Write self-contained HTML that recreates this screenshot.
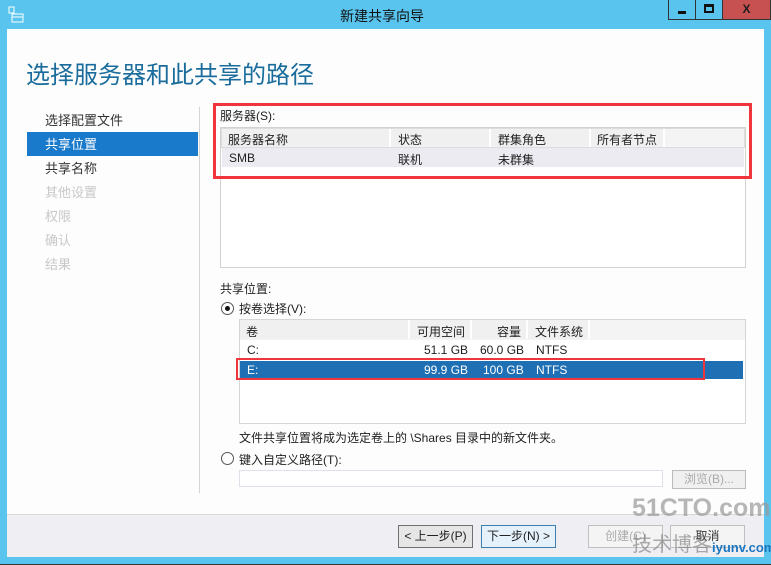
<!DOCTYPE html>
<html><head><meta charset="utf-8"><style>
*{margin:0;padding:0;box-sizing:border-box}
body{width:771px;height:565px;background:#59c5ee;position:relative;overflow:hidden;font-family:"Liberation Sans","Noto Sans CJK SC",sans-serif;font-size:12px;color:#1e1e1e}
.a{position:absolute;white-space:nowrap}
.win{position:absolute;left:7px;top:29px;width:757px;height:528px;background:#fcfdfc}
.bar{position:absolute;left:7px;top:514px;width:757px;height:43px;background:#efeef3;border-top:1px solid #d8d8d8}
.btn{position:absolute;height:23px;border:1px solid #707070;background:#e6e6e6;text-align:center;line-height:21px;font-size:12px}
.hdr{background:#f0f0f0;border-right:2px solid #fff}
</style></head><body>
<div class="a" style="left:0;top:564px;width:771px;height:1px;background:#333"></div>
<svg class="a" style="left:8px;top:6px" width="18" height="18" viewBox="0 0 18 18"><rect x="1" y="1" width="5" height="6" fill="none" stroke="#fff"/><rect x="4" y="8" width="11" height="8" fill="none" stroke="#fff"/><line x1="4" y1="11" x2="15" y2="11" stroke="#fff"/></svg>
<div class="a" style="left:340px;top:6px;font-size:14px;color:#111">新建共享向导</div>
<div class="a" style="left:668px;top:0;width:28px;height:20px;border:1px solid #333;border-top:none"><div class="a" style="left:9px;top:11px;width:8px;height:3px;background:#111"></div></div>
<div class="a" style="left:695px;top:0;width:28px;height:20px;border:1px solid #333;border-top:none"><div class="a" style="left:8px;top:4px;width:10px;height:9px;border:2px solid #111;border-top-width:3px"></div></div>
<div class="a" style="left:722px;top:0;width:49px;height:20px;background:#c75050;border:1px solid #333;border-top:none;text-align:center;font-weight:bold;font-size:12px;line-height:18px">X</div>
<div class="win"></div>
<div class="a" style="left:26px;top:55px;font-size:24px;color:#1a6c9c">选择服务器和此共享的路径</div>
<div class="a" style="left:27px;top:132px;width:171px;height:24px;background:#1979ca"></div>
<div class="a" style="left:45px;top:113px;font-size:13px;line-height:16px;color:#333">选择配置文件</div>
<div class="a" style="left:45px;top:137px;font-size:13px;line-height:16px;color:#fff">共享位置</div>
<div class="a" style="left:45px;top:161px;font-size:13px;line-height:16px;color:#333">共享名称</div>
<div class="a" style="left:45px;top:185px;font-size:13px;line-height:16px;color:#c8c8c8">其他设置</div>
<div class="a" style="left:45px;top:209px;font-size:13px;line-height:16px;color:#c8c8c8">权限</div>
<div class="a" style="left:45px;top:233px;font-size:13px;line-height:16px;color:#c8c8c8">确认</div>
<div class="a" style="left:45px;top:257px;font-size:13px;line-height:16px;color:#c8c8c8">结果</div>
<div class="a" style="left:199px;top:107px;width:1px;height:386px;background:#d4d4d4"></div>
<div class="a" style="left:220px;top:107px">服务器(S):</div>
<div class="a" style="left:220px;top:127px;width:526px;height:141px;border:1px solid #d6d0d0;background:#fff"></div>
<div class="a" style="left:221px;top:128px;width:524px;height:20px;background:#f4f4f4;border:1px solid #ddd"></div>
<div class="a hdr" style="left:222px;top:129px;width:169px;height:18px"></div>
<div class="a hdr" style="left:391px;top:129px;width:100px;height:18px"></div>
<div class="a hdr" style="left:491px;top:129px;width:100px;height:18px"></div>
<div class="a hdr" style="left:591px;top:129px;width:74px;height:18px"></div>
<div class="a" style="left:228px;top:131px">服务器名称</div>
<div class="a" style="left:398px;top:131px">状态</div>
<div class="a" style="left:498px;top:131px">群集角色</div>
<div class="a" style="left:597px;top:131px">所有者节点</div>
<div class="a" style="left:222px;top:148px;width:522px;height:19px;background:#ebebf1"></div>
<div class="a" style="left:229px;top:151px">SMB</div>
<div class="a" style="left:398px;top:151px">联机</div>
<div class="a" style="left:498px;top:151px">未群集</div>
<div class="a" style="left:213px;top:103px;width:539px;height:76px;border:3px solid #f0353d"></div>
<div class="a" style="left:220px;top:280px">共享位置:</div>
<div class="a" style="left:221px;top:302px;width:13px;height:13px;border:1px solid #555;border-radius:50%;background:#fff"><div class="a" style="left:3px;top:3px;width:5px;height:5px;border-radius:50%;background:#111"></div></div>
<div class="a" style="left:239px;top:300px">按卷选择(V):</div>
<div class="a" style="left:239px;top:319px;width:507px;height:105px;border:1px solid #d6d6d6;background:#fff"></div>
<div class="a" style="left:240px;top:320px;width:505px;height:20px;background:#f4f4f4"></div>
<div class="a hdr" style="left:240px;top:320px;width:170px;height:19px"></div>
<div class="a hdr" style="left:410px;top:320px;width:62px;height:19px"></div>
<div class="a hdr" style="left:472px;top:320px;width:56px;height:19px"></div>
<div class="a hdr" style="left:528px;top:320px;width:62px;height:19px"></div>
<div class="a" style="left:246px;top:323px">卷</div>
<div class="a" style="left:417px;top:323px">可用空间</div>
<div class="a" style="left:497px;top:323px">容量</div>
<div class="a" style="left:535px;top:323px">文件系统</div>
<div class="a" style="left:247px;top:343px">C:</div>
<div class="a" style="left:424px;top:343px">51.1 GB</div>
<div class="a" style="left:480px;top:343px">60.0 GB</div>
<div class="a" style="left:536px;top:343px">NTFS</div>
<div class="a" style="left:240px;top:361px;width:503px;height:18px;background:#1f6fb5"></div>
<div class="a" style="left:247px;top:363px;color:#fff">E:</div>
<div class="a" style="left:424px;top:363px;color:#fff">99.9 GB</div>
<div class="a" style="left:483px;top:363px;color:#fff">100 GB</div>
<div class="a" style="left:536px;top:363px;color:#fff">NTFS</div>
<div class="a" style="left:236px;top:358px;width:469px;height:22px;border:2px solid #f0353d"></div>
<div class="a" style="left:239px;top:429px">文件共享位置将成为选定卷上的 \Shares 目录中的新文件夹。</div>
<div class="a" style="left:221px;top:452px;width:13px;height:13px;border:1px solid #555;border-radius:50%;background:#fff"></div>
<div class="a" style="left:239px;top:451px">键入自定义路径(T):</div>
<div class="a" style="left:239px;top:470px;width:424px;height:17px;border:1px solid #e0e0e8;background:#fff"></div>
<div class="a" style="left:672px;top:470px;width:74px;height:19px;border:1px solid #bbb;background:#f0f0f0;color:#aaa;text-align:center;line-height:17px">浏览(B)...</div>
<div class="bar"></div>
<div class="btn" style="left:398px;top:525px;width:75px">&lt; 上一步(P)</div>
<div class="btn" style="left:481px;top:525px;width:75px;border-color:#3c7fb1;background:#e5f1fb">下一步(N) &gt;</div>
<div class="btn" style="left:588px;top:525px;width:75px;border-color:#c0c0c0;background:#f4f4f4;color:#aaa">创建(C)</div>
<div class="btn" style="left:670px;top:525px;width:75px;border-color:#c0c0c0;background:#f4f4f4;color:#333">取消</div>
<div class="a" style="left:632px;top:494px;font-size:25px;font-weight:bold;color:#999;opacity:.7">51CTO.com</div>
<div class="a" style="left:632px;top:528px;font-size:20px;color:#777;opacity:.6">技术博客</div>
<div class="a" style="left:712px;top:540px;font-size:13px;font-weight:bold;color:#1a76c0">iyunv.com</div>
</body></html>
